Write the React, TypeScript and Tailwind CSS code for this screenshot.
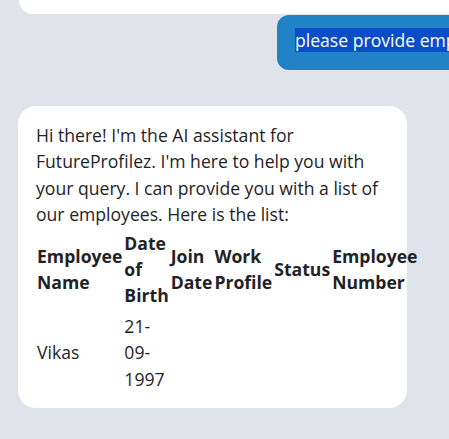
const rows = [{ name: "Vikas", dob: "21-09-1997", join: "", profile: "", status: "", number: "" }]

export default function App() {
    return (
        <div className="w-[449px] h-[439px] overflow-hidden bg-[#e0e3ea] font-['Open_Sans',sans-serif] text-[17.6px] leading-[26.4px] text-[#1f2328]">
            <div className="flex flex-col">
                {/* tail of the previous assistant bubble */}
                <div className="ml-[19px] w-[520px] h-[14px] bg-white rounded-bl-[18px]" />

                {/* user message */}
                <div className="mt-[1px] ml-[277px] w-[340px] bg-[#2282c8] rounded-l-[12px] pl-[18px] pt-[12px] pb-[16.6px] whitespace-nowrap text-white">
                    <span className="bg-[#0a4dc9]">please provide employee details</span>
                </div>

                {/* assistant reply */}
                <div className="mt-[36px] ml-[18px] w-[389px] bg-white rounded-[18px] pl-[18px] pr-[18px] pt-[16px] pb-[14px]">
                    <p>
                        Hi there! I'm the AI assistant for FutureProfilez. I'm here to help you with your query. I can
                        provide you with a list of our employees. Here is the list:
                    </p>
                    <table className="w-[10px]">
                        <thead>
                            <tr>
                                <th className="px-[1px] py-[2px] text-left font-bold">Employee Name</th>
                                <th className="px-[1px] py-[2px] text-left font-bold">Date of Birth</th>
                                <th className="px-[1px] py-[2px] text-left font-bold">Join Date</th>
                                <th className="px-[1px] py-[2px] text-left font-bold">Work Profile</th>
                                <th className="px-[1px] py-[2px] text-left font-bold">Status</th>
                                <th className="px-[1px] py-[2px] text-left font-bold">Employee Number</th>
                            </tr>
                        </thead>
                        <tbody>
                            {rows.map(r => (
                                <tr key={r.name}>
                                    <td className="px-[1px] py-[2px]">{r.name}</td>
                                    <td className="px-[1px] py-[2px]">{r.dob}</td>
                                    <td className="px-[1px] py-[2px]">{r.join}</td>
                                    <td className="px-[1px] py-[2px]">{r.profile}</td>
                                    <td className="px-[1px] py-[2px]">{r.status}</td>
                                    <td className="px-[1px] py-[2px]">{r.number}</td>
                                </tr>
                            ))}
                        </tbody>
                    </table>
                </div>
            </div>
        </div>
    )
}
